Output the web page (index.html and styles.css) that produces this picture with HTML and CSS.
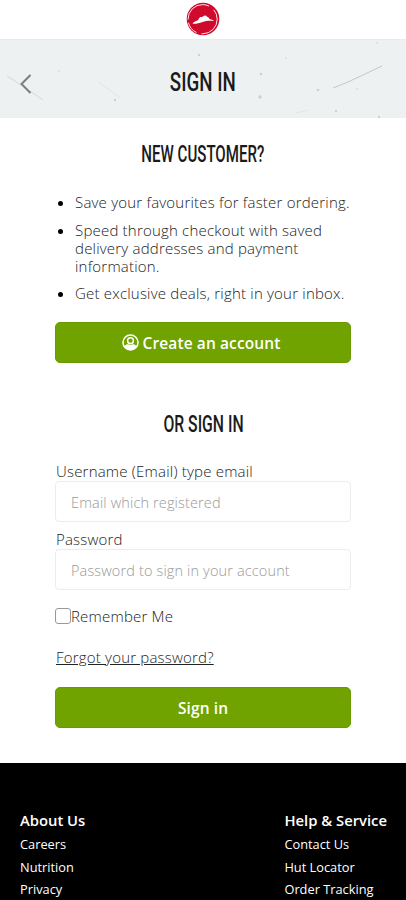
FILE: index.html
```html
<!doctype html>
<html lang="en">
<head>
	<meta charset="UTF-8">
	<title>Sign In</title>
	<link rel="stylesheet" href="styles.css">
</head>
<body>
	<header class="top">
		<svg class="logo" width="36" height="36" viewBox="0 0 36 36">
			<circle cx="18" cy="18" r="16.300" fill="#cf0a2c"/>
			<circle cx="17.6" cy="18.2" r="14.6" fill="none" stroke="#fff" stroke-width=".9" stroke-dasharray="24 5 13 3 30 6"/>
			<path d="M2 10l3-4M1 21l2 7M27 33l5-5" stroke="#fff" stroke-width="1" fill="none"/>
			<path d="M7.500 22.800c1-1.600 3-2.600 5-3.200 1.300-.8 1.200-2.400 2.500-3.300.8-.5 1.500 0 2.300-.5 1-.6 1.700-1.500 2.900-1.400 1.400.1 1.600 1.300 2.500 1.600 1.300.3 1.200 1.700 2.300 2.200 1.500.4 3 .6 4 1.800-3.500-.7-8-.3-11.500.9-3.500 1-6.500 2.300-10 1.900z" fill="#fff"/>
		</svg>
	</header>
	<div class="banner">
		<svg class="scratches" width="406" height="79" viewBox="0 0 406 79" fill="none">
			<path d="M333 48l15-6 17-8 17-8" stroke="#c3c8ca" stroke-width="1"/>
			<path d="M7 36l14 9M30 51l13 9" stroke="#d2d7d9" stroke-width="1"/>
			<path d="M296 73l12-3M98 42l22 15" stroke="#e2e6e8" stroke-width="1"/>
			<g fill="#cbd0d2">
				<circle cx="199" cy="15" r="1.200"/>
				<circle cx="261" cy="34" r="1.300"/>
				<circle cx="260" cy="57" r="1.700"/>
				<circle cx="318" cy="50" r="1.300"/>
				<circle cx="286" cy="18" r=".8"/>
				<circle cx="336" cy="71" r="1.200"/>
				<circle cx="357" cy="49" r=".8"/>
				<circle cx="379" cy="77" r="1.200"/>
				<circle cx="59" cy="31" r=".8"/>
				<circle cx="115" cy="60" r="1.200"/>
				<circle cx="377" cy="3" r=".8"/>
			</g>
		</svg>
		<a class="back" href="#">
			<svg width="12" height="20" viewBox="0 0 12 20"><path d="M10.500 1L1.500 10l9 9" fill="none" stroke="#7b7d7e" stroke-width="2"/></svg>
		</a>
		<h1 class="title"><span>SIGN IN</span></h1>
	</div>
	<main class="content">
		<h2 class="heading heading-new"><span>NEW CUSTOMER?</span></h2>
		<ul class="benefits">
			<li>Save your favourites for faster ordering.</li>
			<li>Speed through checkout with saved delivery addresses and payment information.</li>
			<li>Get exclusive deals, right in your inbox.</li>
		</ul>
		<a class="btn btn-create" href="#">
			<svg class="user" width="17" height="17" viewBox="0 0 17 17">
				<circle cx="8.500" cy="8.500" r="7.500" fill="none" stroke="#fff" stroke-width="1.600"/>
				<circle cx="8.500" cy="6.700" r="2.900" fill="none" stroke="#fff" stroke-width="1.500"/>
				<path d="M2.500 12.500c1.300-2 2.500-2.300 3.700-2.200 1.500.7 3.100.7 4.600 0 1.200-.1 2.400.2 3.700 2.200-1.500 2.300-3.500 3.500-6 3.500s-4.500-1.200-6-3.500z" fill="#fff"/>
			</svg>
			Create an account
		</a>
		<h2 class="heading heading-or"><span>OR SIGN IN</span></h2>
		<form class="form">
			<label for="email">Username (Email) type email</label>
			<input class="field" id="email" type="text" placeholder="Email which registered">
			<label for="password">Password</label>
			<input class="field" id="password" type="password" placeholder="Password to sign in your account">
			<label class="remember"><input class="check" type="checkbox">Remember Me</label>
			<a class="forgot" href="#">Forgot your password?</a>
			<button class="btn" type="button">Sign in</button>
		</form>
	</main>
	<footer class="footer">
		<div class="col">
			<h3>About Us</h3>
			<a href="#">Careers</a>
			<a href="#">Nutrition</a>
			<a href="#">Privacy</a>
		</div>
		<div class="col">
			<h3>Help &amp; Service</h3>
			<a href="#">Contact Us</a>
			<a href="#">Hut Locator</a>
			<a href="#">Order Tracking</a>
		</div>
	</footer>
</body>
</html>
```
FILE: styles.css
```css
* {
	box-sizing: border-box;
}
body {
	margin: 0;
	height: 900px;
	overflow: hidden;
	display: flex;
	flex-direction: column;
	font-family: "Open Sans", sans-serif;
	font-size: 15px;
	font-weight: 300;
	letter-spacing: .2px;
	line-height: 18px;
	color: #222;
	background-color: #fff;
}
.top {
	height: 39px;
	flex: none;
	display: flex;
	justify-content: center;
	padding-top: 1px;
}
.banner {
	position: relative;
	height: 79px;
	flex: none;
	display: flex;
	align-items: center;
	background-color: #eef1f2;
	border-top: 1px solid #e8ebec;
}
.scratches {
	position: absolute;
	left: 0;
	top: 0;
}
.back {
	position: absolute;
	left: 20px;
	top: 34px;
	line-height: 0;
}
.title,
.heading {
	margin: 0;
	width: 100%;
	text-align: center;
	font-family: Roboto, sans-serif;
	font-weight: 500;
	letter-spacing: 0;
	color: #1a1a1a;
}
/* narrow display lettering */
.title span,
.heading span {
	display: inline-block;
	white-space: nowrap;
	transform: scaleX(.72);
}
.title {
	font-size: 26px;
	line-height: 30px;
	padding-top: 6px;
}
.heading {
	font-size: 23px;
	line-height: 26px;
}
.heading-new span {
	transform: scaleX(.655);
}
.heading-or span {
	transform: scaleX(.685);
}
.content {
	height: 645px;
	flex: none;
	width: 296px;
	margin-left: 55px;
	padding-top: 24px;
}
.benefits {
	margin: 25px 0 20px;
	padding: 0 0 0 20px;
}
.benefits li {
	margin-bottom: 9px;
}
.benefits li + li {
	padding-top: .5px;
}
.benefits li::marker {
	color: #000;
}
.btn {
	display: flex;
	align-items: center;
	justify-content: center;
	width: 100%;
	height: 41px;
	border: 1px solid #699a00;
	border-radius: 5px;
	background-color: #70a300;
	color: #fff;
	font-family: inherit;
	font-size: 15.5px;
	font-weight: 600;
	letter-spacing: .1px;
	text-decoration: none;
}
.btn-create {
	padding-right: 4px;
}
.user {
	margin-right: 4px;
}
.heading-or {
	margin: 49px 0 24px;
	padding-left: 1px;
}
.form {
	display: flex;
	flex-direction: column;
}
.form label {
	height: 19px;
	padding-left: 1px;
}
.field {
	height: 41px;
	margin: 0 0 8px;
	padding: 2px 15px 0;
	border: 1px solid #ececec;
	border-radius: 4px;
	font-family: inherit;
	font-size: 14.5px;
	font-weight: 300;
	letter-spacing: .14px;
}
.field::placeholder {
	color: #999;
}
.form .remember {
	display: flex;
	align-items: center;
	margin-top: 8px;
	padding-left: 0;
}
.check {
	appearance: none;
	width: 16px;
	height: 16px;
	margin: 0;
	border: 1px solid #999;
	border-radius: 3px;
}
.forgot {
	align-self: flex-start;
	margin: 23px 0 21px 1px;
	color: #222;
}
.footer {
	flex: 1;
	display: flex;
	justify-content: space-between;
	padding: 46px 19px 0 20px;
	overflow: hidden;
	background-color: #000;
	color: #fff;
	letter-spacing: 0;
}
.footer h3 {
	margin: 0 0 2px;
	font-size: 14.8px;
	line-height: 22px;
	font-weight: 600;
}
.footer a {
	display: block;
	color: #fff;
	font-size: 12.8px;
	font-weight: 500;
	line-height: 22.5px;
	text-decoration: none;
}
```
